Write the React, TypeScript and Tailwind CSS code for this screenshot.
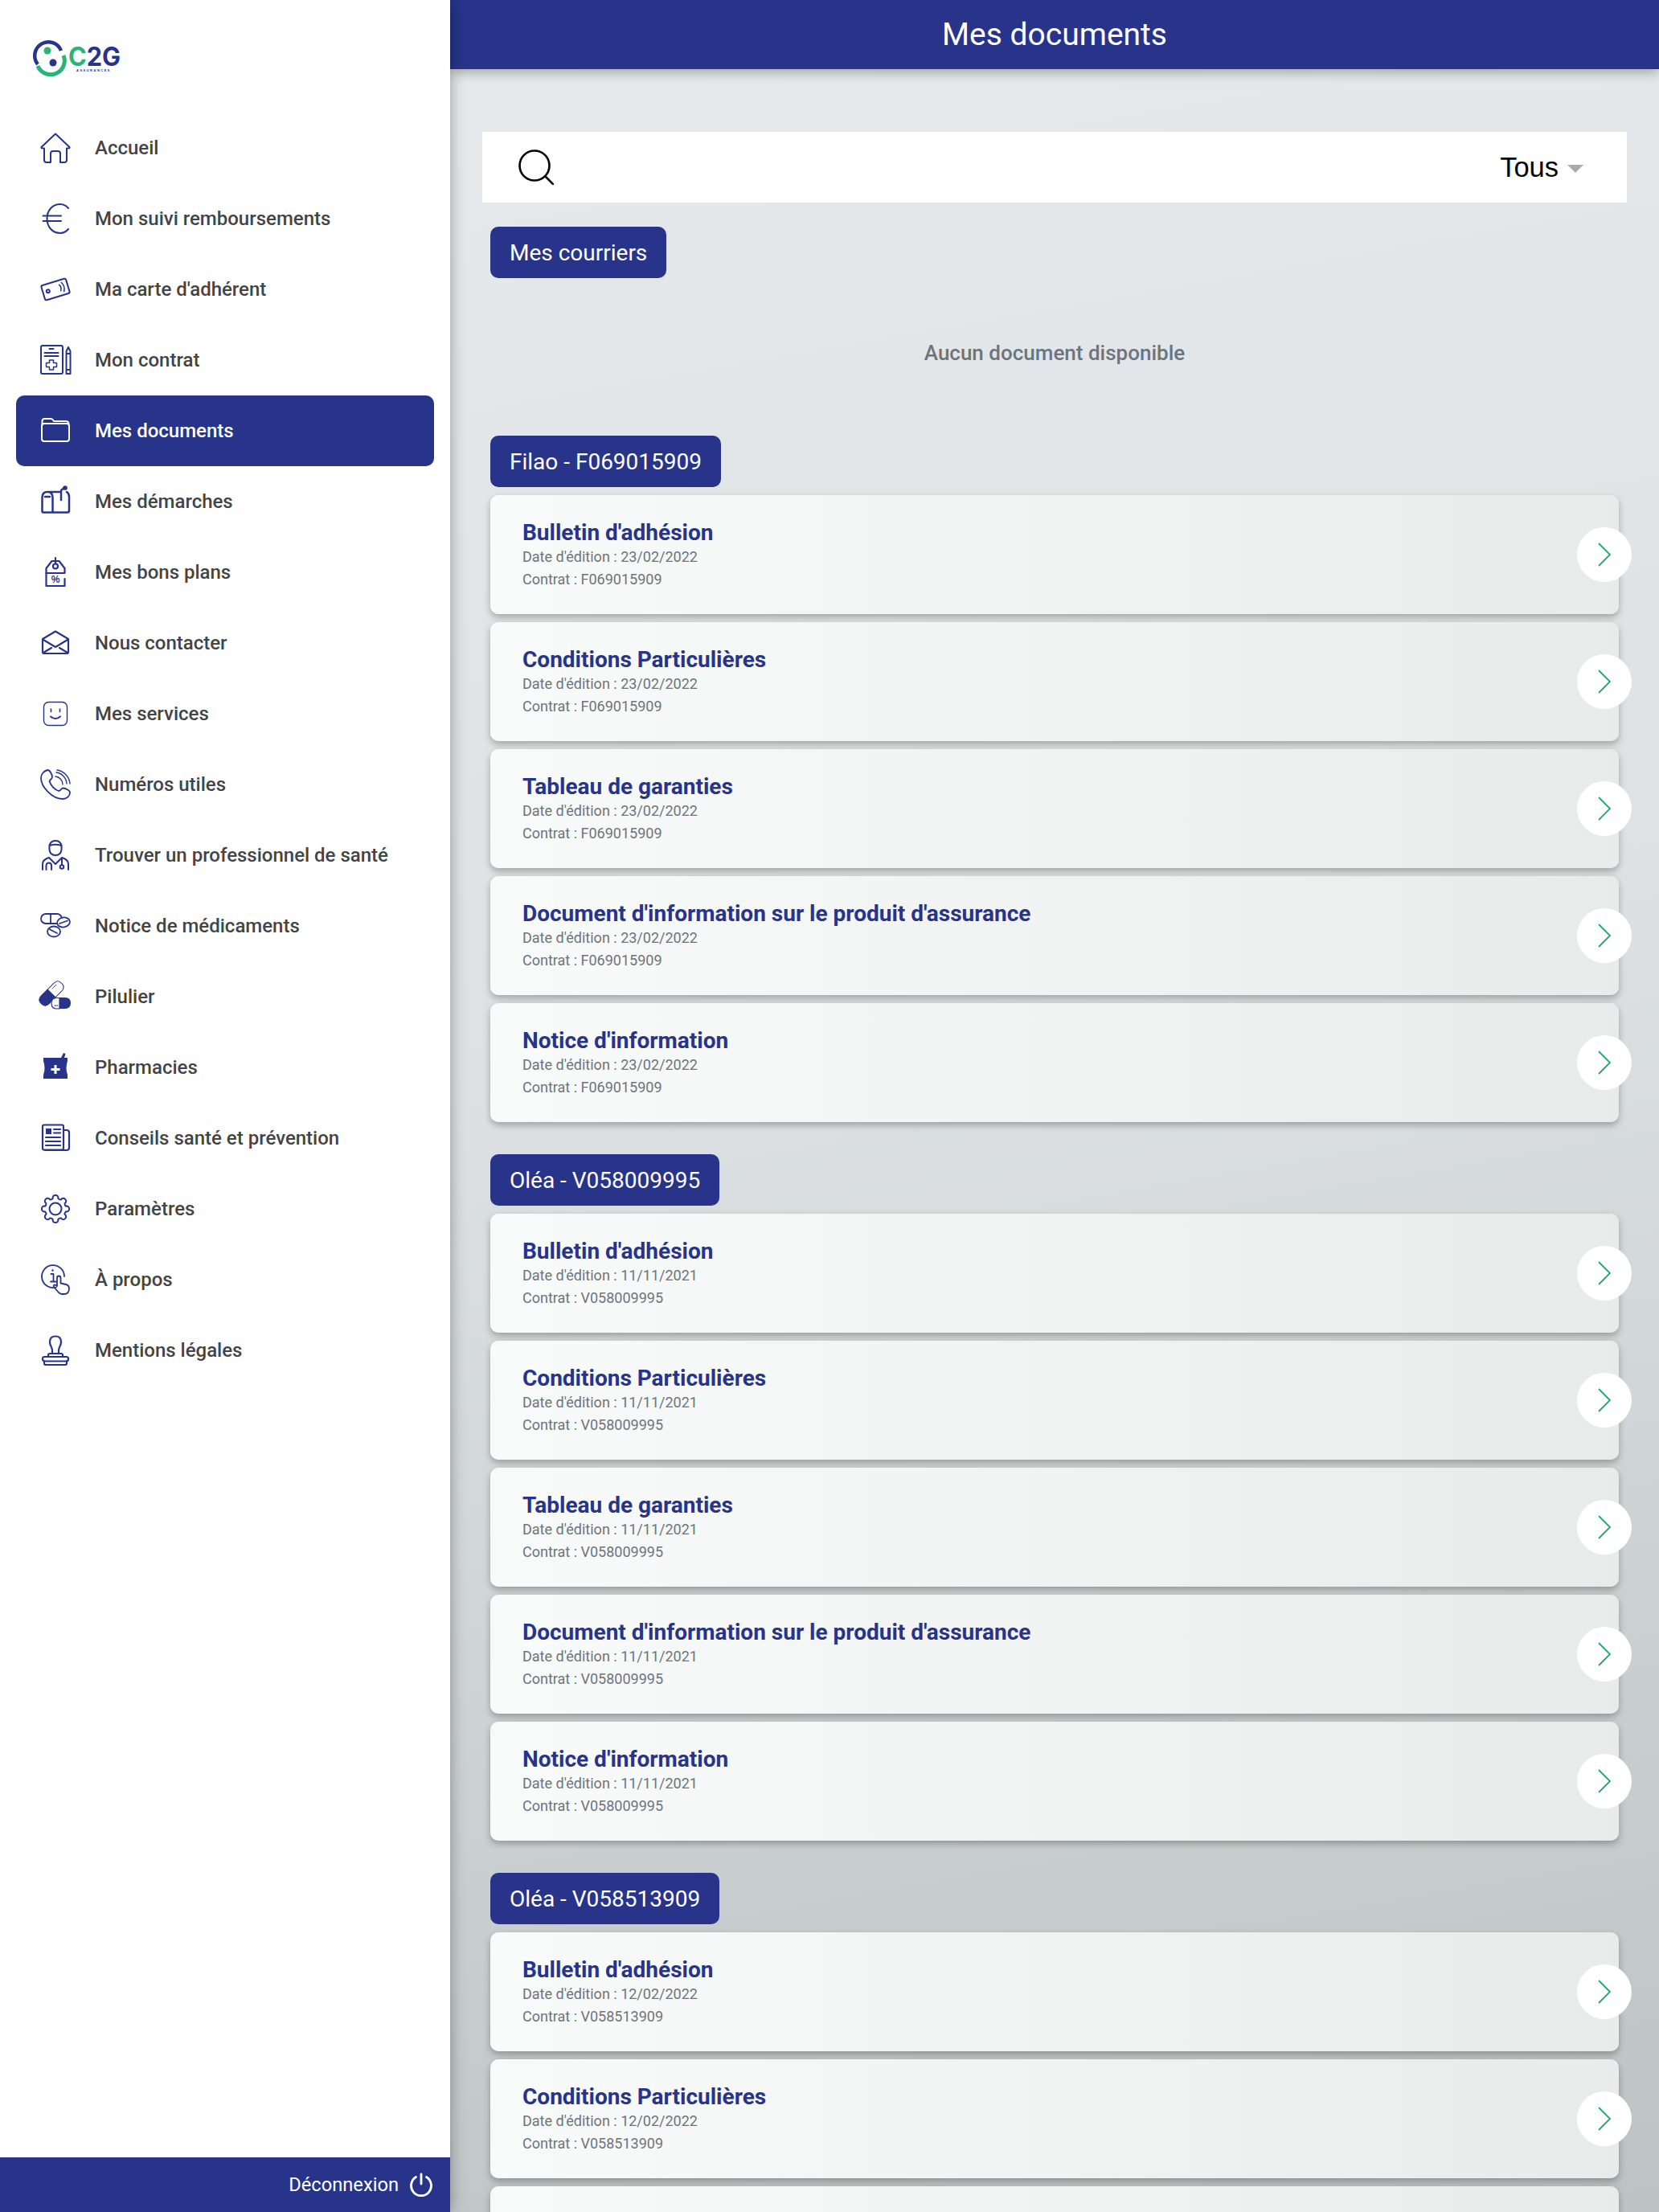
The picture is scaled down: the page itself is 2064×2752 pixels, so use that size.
const navy = "#28348a"

function gearPath() {
	const teeth = 8
	const cx = 19
	const cy = 19
	const outer = 18
	const inner = 13.5
	let d = ""
	for (let i = 0; i < teeth; i++) {
		const a = (i / teeth) * Math.PI * 2 - Math.PI / 2
		const step = Math.PI / teeth
		const p = (r: number, t: number) => `${(cx + r * Math.cos(t)).toFixed(2)} ${(cy + r * Math.sin(t)).toFixed(2)}`
		d += `${i === 0 ? "M" : "L"}${p(inner, a - step * 0.62)} C${p(outer + 1, a - step * 0.62)} ${p(outer + 1, a + step * 0.62)} ${p(inner, a + step * 0.62)} `
		d += `Q${p(inner - 1.2, a + step)} ${p(inner, a + step * 1.38)} `
	}
	return d + "Z"
}

const icons: Record<string, React.ReactNode> = {
	home: <path d="M19 1.5 L1.5 18 Q1 19.5 3 19.5 H5 V34 Q5 37 8 37 H13 V26 Q13 23 16 23 H22 Q25 23 25 26 V37 H30 Q33 37 33 34 V19.5 H35 Q37 19.5 36.5 18 Z" />,
	euro: (
		<g>
			<path d="M35 6 C32 2.5 28 1 25 1 C15 1 8.5 9 8.5 19 C8.5 29 15 37 25 37 C28 37 32 35.5 35 32" />
			<path d="M3.5 15.5 H26 M3.5 22 H26" />
		</g>
	),
	card: (
		<g transform="rotate(-17 19 19)">
			<rect x="3" y="9.5" width="32" height="19" rx="2" />
			<circle cx="9.5" cy="18.5" r="2" />
			<path d="M25 15 q2.5 3.5 0 7.5 M28.5 13 q3.5 5.5 0 11.5" strokeWidth={1.6} />
		</g>
	),
	contract: (
		<g>
			<rect x="1" y="1" width="27" height="35" rx="2" />
			<path d="M11.5 5 H16.5 M5.5 10 H22.5 M5.5 14 H22.5" />
			<path d="M11.5 19 H16.5 V22.5 H20.5 V27.5 H16.5 V31 H11.5 V27.5 H7.5 V22.5 H11.5 Z" strokeWidth={1.5} />
			<path d="M32.5 36 V8 L35 3 L37.5 8 V36 Z M32.5 31 H37.5 M32.5 11 H37.5" />
		</g>
	),
	folder: (
		<g stroke="#ffffff">
			<path d="M2.5 11 V7 Q2.5 4 5.5 4 H13 Q15 4 16 5.5 L17 7 H32 Q35.5 7 35.5 11" />
			<rect x="2" y="10" width="34" height="22" rx="3" />
		</g>
	),
	mailbox: (
		<g strokeWidth={2.5}>
			<path d="M2.5 31 V14 Q2.5 7 9 7 H24 M9 7 Q15.5 7 15.5 14 V32.5 M2.5 31 Q2.5 32.5 4 32.5 H34 Q36 32.5 36 30.5 V13 Q36 9 33 7" />
			<path d="M6 13 H12" />
			<path d="M26 17 V5 L31 1" />
			<circle cx="31" cy="2" r="1.6" fill="#28348a" />
		</g>
	),
	tag: (
		<g strokeWidth={2.2}>
			<path d="M7.5 20 V14 L14.5 5 H23.5 L30.5 14 V20 Z" />
			<path d="M7.5 20 V36 H30.5 V27" />
			<circle cx="19" cy="11.5" r="3" />
			<path d="M19 1 V8" />
			<text x="19" y="32" fontSize="12" fontWeight="700" textAnchor="middle" fill="#28348a" stroke="none" fontFamily="'Liberation Sans', sans-serif">%</text>
		</g>
	),
	mail: (
		<g strokeWidth={2.2}>
			<path d="M3 14 L19 4.5 L35 14 V30 Q35 32 33 32 H5 Q3 32 3 30 Z" />
			<path d="M4 15 L19 24 L34 15 M4 31 L14 25 M34 31 L24 25" />
		</g>
	),
	face: (
		<g>
			<rect x="4.5" y="4.5" width="29" height="29" rx="6" strokeWidth={1.4} />
			<path d="M13.5 13 V16.5 M24.5 13 V16.5" strokeWidth={1.6} />
			<path d="M13 22.5 Q19 27.5 25 22.5" />
		</g>
	),
	phone: (
		<g strokeWidth={1.8}>
			<path d="M9.5 1 C4.5 2 1 6 1 11 C1 22 15 37 28 37 C33 37 37 33.5 37 29 C37 26.5 31.5 23.5 28.5 23.5 C26.5 23.5 25.5 26.5 23 27 C18 25.5 13 20 11.5 15 C12 13 15 12 15 9.5 C15 7 12 1 9.5 1 Z" />
			<path d="M19 9 A10 10 0 0 1 28 19 M20 4 A15 15 0 0 1 33 18 M21 1 A19 19 0 0 1 37 18" strokeWidth={1.4} />
		</g>
	),
	doctor: (
		<g strokeWidth={2}>
			<rect x="11.5" y="1" width="15" height="18" rx="7" />
			<path d="M11.5 7 Q19 4.5 26.5 7" />
			<path d="M3 37 V30 Q3 24.5 11 22 L19 30 L27 22 Q35 24.5 35 30 V37" />
			<path d="M7.5 37 V32 Q7.5 28.5 11 28.5 Q14 28.5 14 32 V37" />
			<path d="M27 23 V31" />
			<circle cx="27" cy="33.5" r="2.3" />
		</g>
	),
	pills: (
		<g strokeWidth={1.8}>
			<rect x="1" y="4" width="26" height="12" rx="6" />
			<path d="M13 4 V16" />
			<ellipse cx="29" cy="14.5" rx="8" ry="6" transform="rotate(-10 29 14.5)" fill="#ffffff" />
			<path d="M24 16 L34 12.5" />
			<ellipse cx="17" cy="26" rx="8" ry="6.5" fill="#ffffff" />
			<path d="M11.5 23 L21 28" />
		</g>
	),
	pill: (
		<g>
			<g transform="rotate(-45 14 15)" strokeWidth={1}>
				<path d="M14 8 H25 Q32 8 32 15 Q32 22 25 22 H14 Z" fill="#ffffff" />
				<path d="M14 8 H3 Q-4 8 -4 15 Q-4 22 3 22 H14 Z" fill="#28348a" />
				<path d="M19 11.5 H26" strokeWidth={0.8} />
			</g>
			<path d="M14 27.5 Q14 20.5 21 20.5 H24 V34 H21 Q14 34 14 27.5 Z" fill="#ffffff" strokeWidth={1.2} />
			<path d="M24 20 H31 Q38 20 38 27 Q38 34 31 34 H24 Z" fill="#28348a" strokeWidth={0} />
			<path d="M18 30 H22" strokeWidth={1} />
		</g>
	),
	pharmacy: (
		<g stroke="none">
			<path fill="#28348a" d="M4 7 H26 L29 1 L31.5 2 L30 7 H34 V11 Q31 20 34 28 V33 H4 V28 Q7 20 4 11 Z" />
			<path fill="#ffffff" d="M17.5 16 H20.5 V20 H24.5 V23 H20.5 V27 H17.5 V23 H13.5 V20 H17.5 Z" />
		</g>
	),
	news: (
		<g strokeWidth={2.2}>
			<rect x="3" y="2.5" width="26" height="31" rx="2" />
			<path d="M29 9 H33 Q36 9 36 12 V31 Q36 34 33 34 H6" />
			<rect x="7" y="7" width="7" height="7" fill="#28348a" strokeWidth={0} />
			<path d="M17 8 H25 M17 12.5 H25 M7 18 H25 M7 23 H25 M7 28 H25" />
		</g>
	),
	gear: (
		<g strokeWidth={2}>
			<path d={gearPath()} />
			<circle cx="19" cy="19" r="7.5" />
		</g>
	),
	about: (
		<g strokeWidth={1.8}>
			<path d="M20 28.5 A14 14 0 1 1 30 15" />
			<path d="M13.5 12 H16.5 V21 M13 21.5 H20" />
			<circle cx="15.5" cy="7.5" r="1.2" fill="#28348a" strokeWidth={0} />
			<path d="M21 27 V17 Q21 14.5 23 14.5 Q25.5 14.5 25.5 17 V23.5 L32 25 Q36 26 36 30 Q36 37 29.5 37 H27 Q24.5 37 22.5 34.5 L17 28 Q16 25.5 18.5 25.5 L21 27" />
		</g>
	),
	stamp: (
		<g strokeWidth={2.2}>
			<path d="M15 23 V19 Q15 17 13.5 14 Q12 11.5 12 8.5 Q12 1.5 19 1.5 Q26 1.5 26 8.5 Q26 11.5 24.5 14 Q23 17 23 19 V23" />
			<path d="M10 27 V25 Q10 23 12 23 H26 Q28 23 28 25 V27" />
			<rect x="3" y="27" width="32" height="5.5" rx="2.5" />
			<path d="M5 32.5 V35 Q5 37 7 37 H31 Q33 37 33 35 V32.5" />
		</g>
	),
}

const navItems = [
	{ label: "Accueil", icon: "home" },
	{ label: "Mon suivi remboursements", icon: "euro" },
	{ label: "Ma carte d'adhérent", icon: "card" },
	{ label: "Mon contrat", icon: "contract" },
	{ label: "Mes documents", icon: "folder", active: true },
	{ label: "Mes démarches", icon: "mailbox" },
	{ label: "Mes bons plans", icon: "tag" },
	{ label: "Nous contacter", icon: "mail" },
	{ label: "Mes services", icon: "face" },
	{ label: "Numéros utiles", icon: "phone" },
	{ label: "Trouver un professionnel de santé", icon: "doctor" },
	{ label: "Notice de médicaments", icon: "pills" },
	{ label: "Pilulier", icon: "pill" },
	{ label: "Pharmacies", icon: "pharmacy" },
	{ label: "Conseils santé et prévention", icon: "news" },
	{ label: "Paramètres", icon: "gear" },
	{ label: "À propos", icon: "about" },
	{ label: "Mentions légales", icon: "stamp" },
]

const documents = [
	"Bulletin d'adhésion",
	"Conditions Particulières",
	"Tableau de garanties",
	"Document d'information sur le produit d'assurance",
	"Notice d'information",
]

const groups = [
	{ name: "Filao - F069015909", contract: "F069015909", date: "23/02/2022" },
	{ name: "Oléa - V058009995", contract: "V058009995", date: "11/11/2021" },
	{ name: "Oléa - V058513909", contract: "V058513909", date: "12/02/2022" },
]

function Logo() {
	return (
		<svg width="112" height="42" viewBox="0 0 112 42" className="overflow-visible">
			<path d="M5 28 A17 17 0 1 1 34 11" fill="none" stroke="#28348a" strokeWidth="4.5" />
			<path d="M37 17 A17 17 0 0 1 5 30" fill="none" stroke="#2bb37a" strokeWidth="5" />
			<circle cx="17" cy="11" r="4.5" fill="#2bb37a" />
			<circle cx="24" cy="26" r="4.5" fill="#28348a" />
			<text x="43" y="30" fontSize="32" fontWeight="700" fill="#2bb37a" fontFamily="Inter, sans-serif" textLength="65" lengthAdjust="spacingAndGlyphs">
				C<tspan fill="#28348a">2G</tspan>
			</text>
			<text x="53" y="36.5" fontSize="4" fontWeight="700" fill="#28348a" fontFamily="'Liberation Sans', sans-serif" letterSpacing="1.5">ASSURANCES</text>
		</svg>
	)
}

function Sidebar() {
	return (
		<aside className="z-20 flex h-full w-[560px] shrink-0 flex-col bg-white shadow-[0_0_18px_rgba(0,0,0,0.35)]">
			<div className="h-[140px] pl-[42px] pt-[52px]">
				<Logo />
			</div>
			<nav className="flex-1 px-5">
				{navItems.map((item) => (
					<div
						key={item.label}
						className={`flex h-[88px] items-center rounded-[10px] pl-[30px] text-[24px] font-medium ${item.active ? "bg-[#28348a] text-white" : "text-[#444444]"}`}
					>
						<svg
							width="38"
							height="38"
							viewBox="0 0 38 38"
							fill="none"
							stroke={navy}
							strokeWidth="2"
							strokeLinecap="round"
							strokeLinejoin="round"
							className="shrink-0 overflow-visible"
						>
							{icons[item.icon]}
						</svg>
						<span className="ml-[30px]">{item.label}</span>
					</div>
				))}
			</nav>
			<div className="flex h-[68px] items-center justify-end gap-[13px] bg-[#28348a] pr-[21px] text-white">
				<span className="pt-0.5 text-[23.7px]">Déconnexion</span>
				<svg width="30" height="30" viewBox="0 0 30 30" fill="none" stroke="#ffffff" strokeWidth="2.8" strokeLinecap="round">
					<path d="M15 2 V14 M8.5 5.5 A12.5 12.5 0 1 0 21.5 5.5" />
				</svg>
			</div>
		</aside>
	)
}

function Pill({ children }: { children: React.ReactNode }) {
	return (
		<div className="inline-flex h-16 items-center rounded-[10px] bg-[#28348a] px-6 pt-px text-[28px] text-white">{children}</div>
	)
}

function DocumentCard({ title, date, contract }: { title: string; date: string; contract: string }) {
	return (
		<div className="relative h-[148px] rounded-[10px] bg-gradient-to-r from-[#f9fafa] to-[#e9ebeb] pl-10 pt-[29px] shadow-[0_4px_9px_rgba(0,0,0,0.28)]">
			<h3 className="text-[28px] leading-9 font-bold text-[#28348a]">{title}</h3>
			<p className="-mt-[2px] text-[18px] leading-7 text-[#6c757d]">Date d'édition : {date}</p>
			<p className="text-[18px] leading-7 text-[#6c757d]">Contrat : {contract}</p>
			<div className="absolute top-[40px] -right-4 flex h-[68px] w-[68px] items-center justify-center rounded-full bg-white">
				<svg width="16" height="30" viewBox="0 0 16 30" fill="none" stroke="#22a86e" strokeWidth="1.8">
					<path d="M1 1 L15 15 L1 29" />
				</svg>
			</div>
		</div>
	)
}

export default function App() {
	return (
		<div className="flex h-[2752px] w-[2064px] overflow-hidden font-['Roboto',sans-serif]">
			<Sidebar />
			<main className="relative flex h-full flex-1 flex-col overflow-hidden bg-[linear-gradient(170deg,#e7eaed_0%,#dde1e4_45%,#bcc3c3_100%)]">
				<header className="z-10 flex h-[86px] shrink-0 items-center justify-center bg-[#28348a] text-[39px] text-white shadow-[0_4px_14px_rgba(0,0,0,0.3)]">
					Mes documents
				</header>
				<div className="px-[40px] pt-[78px]">
					<div className="flex h-[88px] items-center justify-between bg-white pl-[45px] pr-[54px]">
						<svg width="44" height="44" viewBox="0 0 44 44" fill="none" stroke="#000000" strokeWidth="2.6">
							<circle cx="20" cy="20" r="18.5" />
							<path d="M33 33 L44 44" />
						</svg>
						<div className="flex items-center gap-[11px]">
							<span className="pt-0.5 font-['Liberation_Sans',sans-serif] text-[34.5px] text-black">Tous</span>
							<span className="mt-1 h-0 w-0 border-x-[10px] border-t-[10px] border-x-transparent border-t-[#aaaaaa]" />
						</div>
					</div>
					<div className="mt-[30px] px-[10px]">
						<Pill>Mes courriers</Pill>
						<p className="mt-[78px] mb-[88px] text-center text-[26px] leading-[30px] font-medium text-[#6c757d]">Aucun document disponible</p>
						{groups.map((group) => (
							<section key={group.contract} className="mt-10">
								<Pill>{group.name}</Pill>
								<div className="mt-[10px] flex flex-col gap-[10px]">
									{documents.map((title) => (
										<DocumentCard key={title} title={title} date={group.date} contract={group.contract} />
									))}
								</div>
							</section>
						))}
					</div>
				</div>
			</main>
		</div>
	)
}
